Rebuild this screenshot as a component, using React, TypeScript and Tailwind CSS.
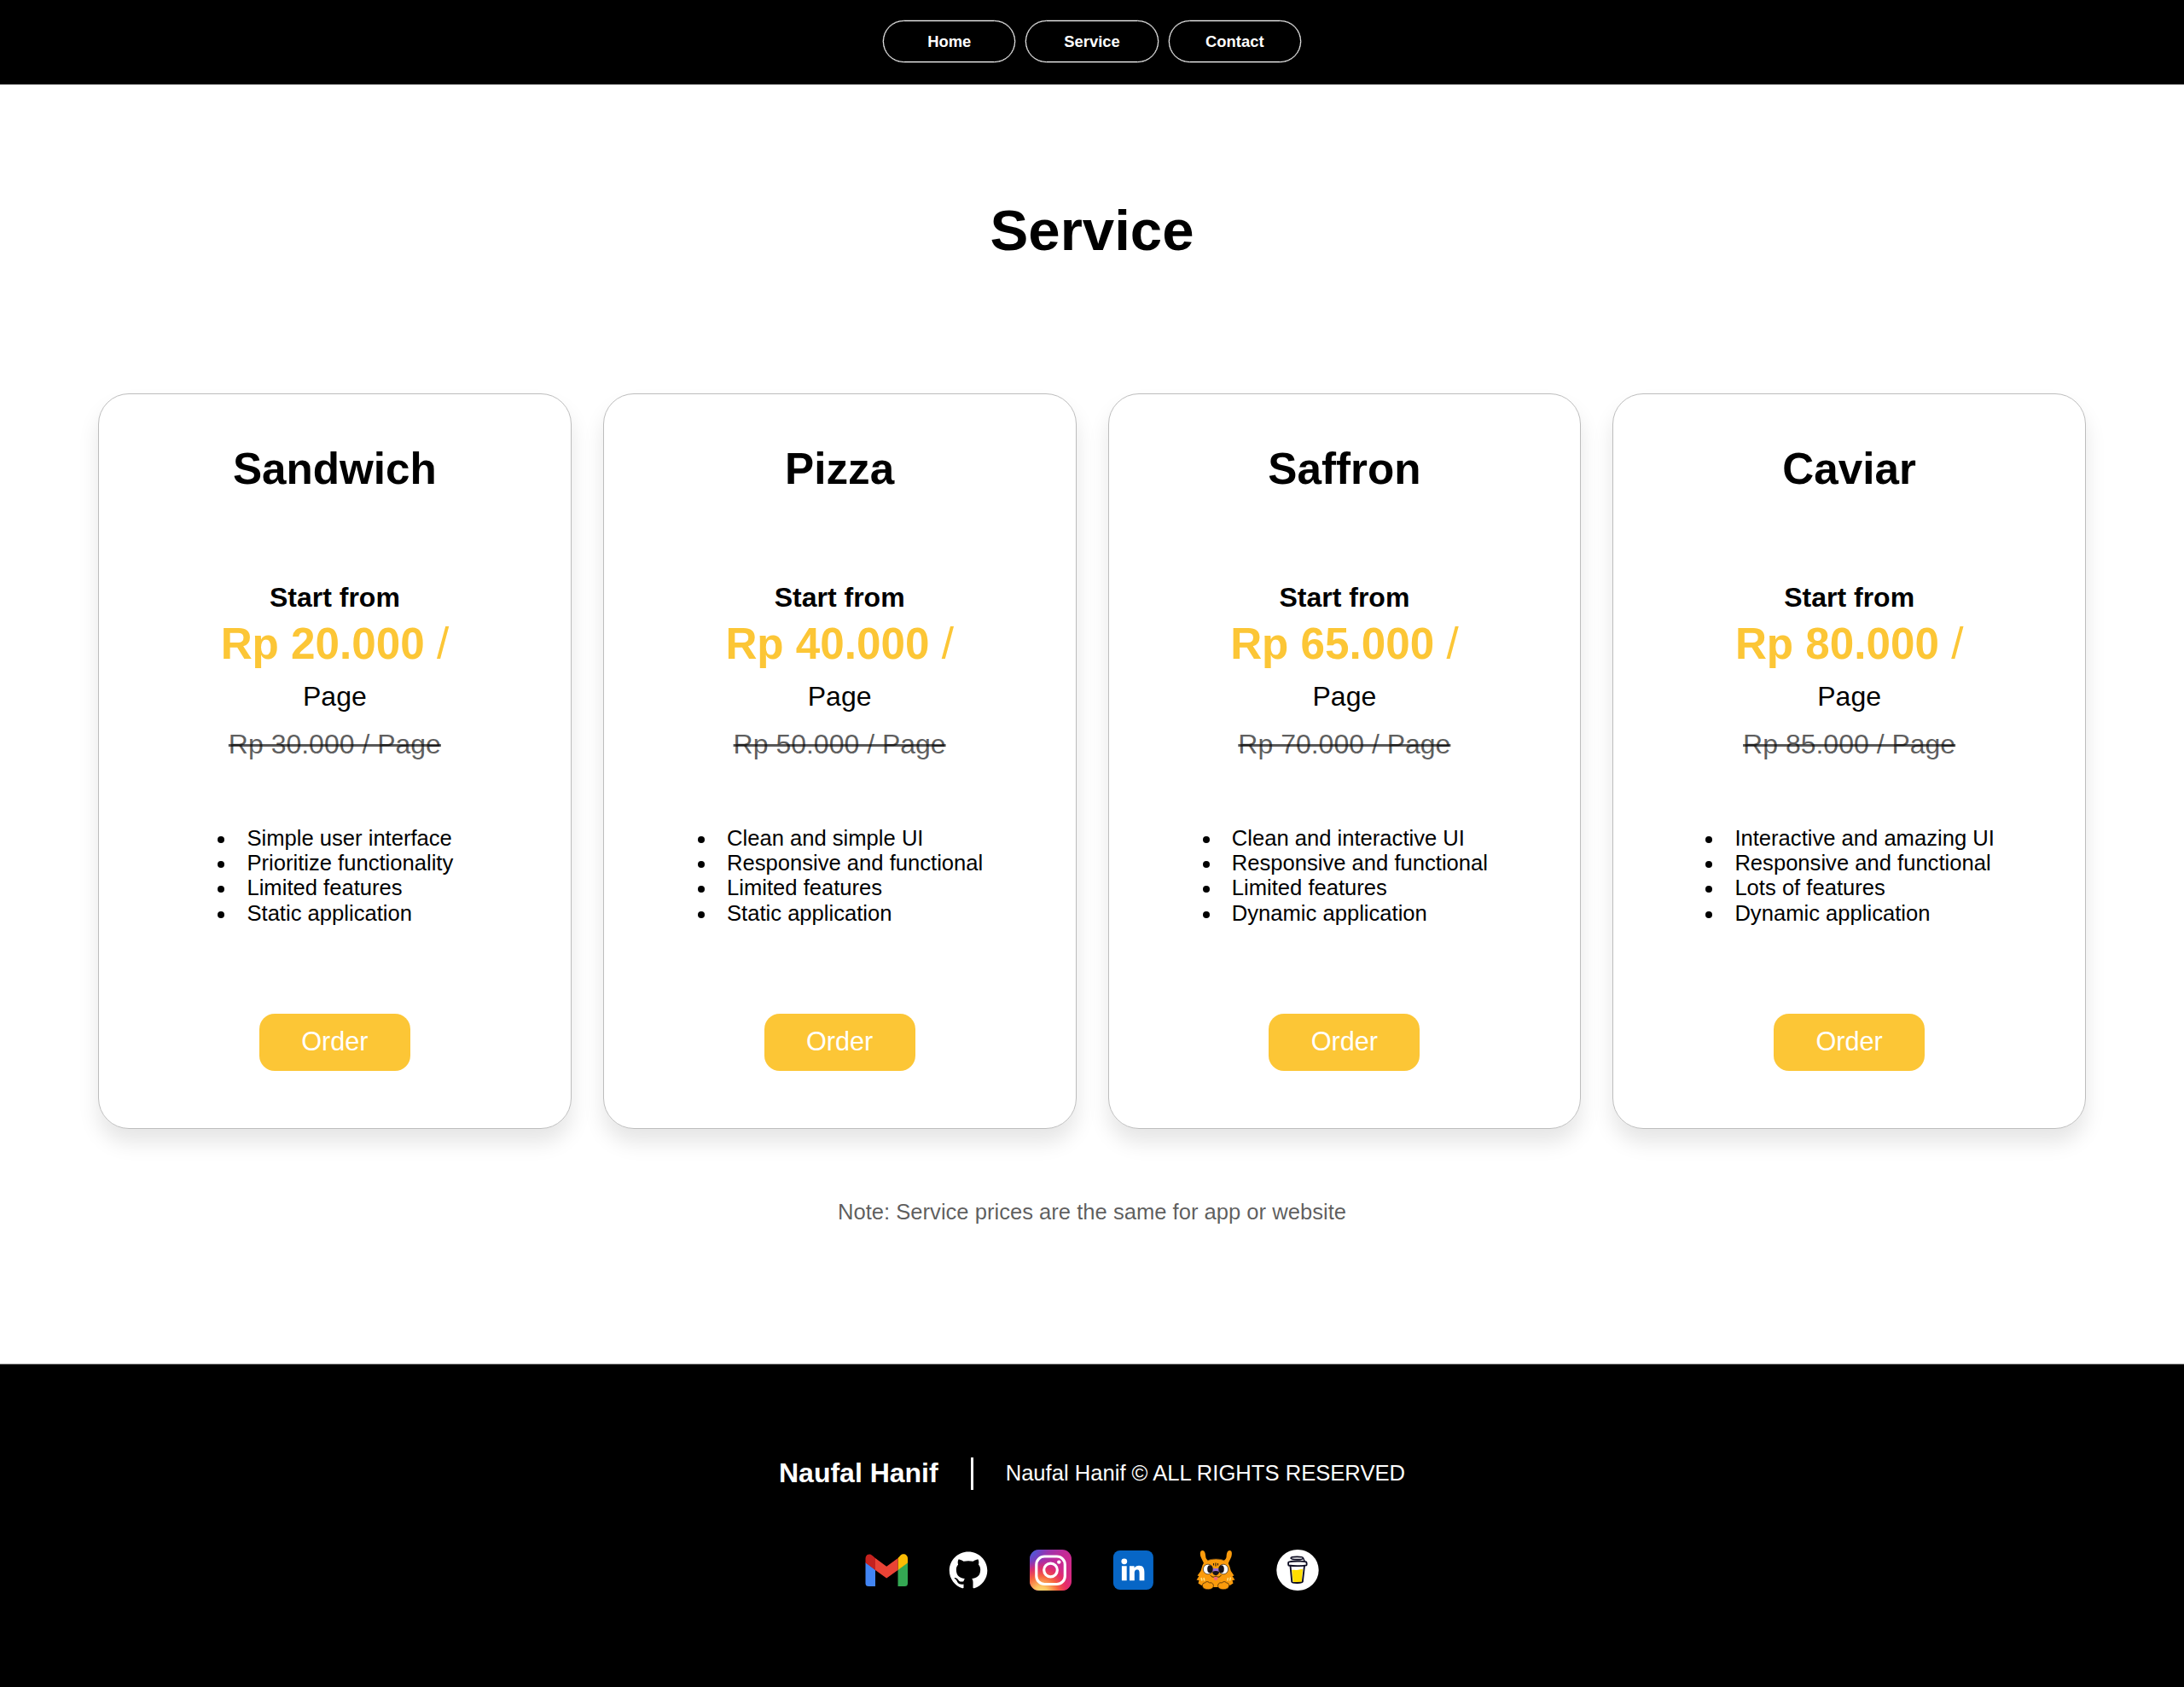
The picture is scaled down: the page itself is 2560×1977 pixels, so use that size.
import React from "react";

const nav = ["Home", "Service", "Contact"];

const plans = [
  { name: "Sandwich", price: "Rp 20.000", old: "Rp 30.000 / Page", items: ["Simple user interface", "Prioritize functionality", "Limited features", "Static application"] },
  { name: "Pizza", price: "Rp 40.000", old: "Rp 50.000 / Page", items: ["Clean and simple UI", "Responsive and functional", "Limited features", "Static application"] },
  { name: "Saffron", price: "Rp 65.000", old: "Rp 70.000 / Page", items: ["Clean and interactive UI", "Responsive and functional", "Limited features", "Dynamic application"] },
  { name: "Caviar", price: "Rp 80.000", old: "Rp 85.000 / Page", items: ["Interactive and amazing UI", "Responsive and functional", "Lots of features", "Dynamic application"] },
];

function Gmail() {
  return (
    <svg viewBox="0 0 50 48" className="h-12 w-[50px]">
      <path d="M0.5 15 12 23.5V43H4a3.5 3.5 0 0 1-3.5-3.5z" fill="#4285f4" />
      <path d="M38.5 23.5 50 15v24.500a3.500 3.500 0 0 1-3.500 3.500h-8z" fill="#34a853" />
      <path d="M38.500 10 41.500 6.800C45 3.500 50 5.800 50 10.500V15.500L38.500 24z" fill="#fbbc04" />
      <path d="M12 24V10l13.200 9.800L38.500 10v14L25.200 33.500z" fill="#ea4335" />
      <path d="M.5 15.500v-5C.5 5.800 5.500 3.500 9.200 7.500L12 10v14z" fill="#c5221f" />
    </svg>
  );
}

function Github() {
  return (
    <svg viewBox="0 0 50 48" className="h-12 w-[50px]">
      <g transform="translate(2.800 2) scale(1.855 1.825)">
        <path
          fill="#fff"
          d="M12 .297c-6.630 0-12 5.373-12 12 0 5.303 3.438 9.800 8.205 11.385.6.113.82-.258.82-.577 0-.285-.01-1.040-.015-2.040-3.338.724-4.042-1.610-4.042-1.610C4.422 18.070 3.633 17.700 3.633 17.700c-1.087-.744.084-.729.084-.729 1.205.084 1.838 1.236 1.838 1.236 1.070 1.835 2.809 1.305 3.495.998.108-.776.417-1.305.76-1.605-2.665-.3-5.466-1.332-5.466-5.930 0-1.310.465-2.380 1.235-3.220-.135-.303-.54-1.523.105-3.176 0 0 1.005-.322 3.300 1.230.96-.267 1.980-.399 3-.405 1.020.006 2.040.138 3 .405 2.280-1.552 3.285-1.230 3.285-1.230.645 1.653.24 2.873.12 3.176.765.84 1.230 1.910 1.230 3.220 0 4.610-2.805 5.625-5.475 5.920.42.36.81 1.096.81 2.220 0 1.606-.015 2.896-.015 3.286 0 .315.21.69.825.57C20.565 22.092 24 17.592 24 12.297c0-6.627-5.373-12-12-12"
        />
      </g>
    </svg>
  );
}

function Instagram() {
  return (
    <svg viewBox="0.700 0 50 48" className="h-12 w-[50px]">
      <defs>
        <linearGradient id="igBase" x1="0" y1="0" x2="1" y2="1">
          <stop offset="0" stopColor="#6a3fc8" />
          <stop offset=".45" stopColor="#c32a98" />
          <stop offset="1" stopColor="#e02a75" />
        </linearGradient>
        <radialGradient id="igWarm" cx=".27" cy="1.060" r=".82">
          <stop offset="0" stopColor="#fedd76" />
          <stop offset=".2" stopColor="#fdc661" />
          <stop offset=".5" stopColor="#f7653f" />
          <stop offset=".75" stopColor="#ee2f58" stopOpacity=".7" />
          <stop offset="1" stopColor="#d8278a" stopOpacity="0" />
        </radialGradient>
        <radialGradient id="igCool" cx="0" cy="0" r=".45">
          <stop offset="0" stopColor="#3a6be0" />
          <stop offset="1" stopColor="#6a3fc8" stopOpacity="0" />
        </radialGradient>
      </defs>
      <rect x=".7" y="0" width="49" height="48" rx="11" fill="url(#igBase)" />
      <rect x=".7" y="0" width="49" height="48" rx="11" fill="url(#igWarm)" />
      <rect x=".7" y="0" width="49" height="48" rx="11" fill="url(#igCool)" />
      <rect x="8.500" y="8" width="33.500" height="32.500" rx="9.500" fill="none" stroke="#fff" strokeWidth="3.200" />
      <circle cx="25.200" cy="24" r="7.800" fill="none" stroke="#fff" strokeWidth="3.200" />
      <circle cx="35" cy="14.600" r="2.200" fill="#fff" />
    </svg>
  );
}

function LinkedIn() {
  return (
    <svg viewBox="-0.400 0 50 48" className="h-12 w-[50px]">
      <rect x="1.500" y="1" width="47" height="46" rx="8" fill="#0766c6" />
      <circle cx="14.400" cy="13.800" r="3.400" fill="#fff" />
      <path d="M11.500 19.300h5.800v17h-5.800zM20.600 19.300h5.600v2.300c1-1.600 2.900-2.800 5.500-2.800 5.100 0 6.300 3.300 6.300 7.900v9.600h-5.800v-8.600c0-2.200-.2-4.200-2.700-4.200-2.600 0-3.100 2-3.100 4.100v8.700h-5.800z" fill="#fff" />
    </svg>
  );
}

function Mascot() {
  return (
    <svg viewBox="0 0 50 48" className="h-12 w-[50px]">
      <g fill="#fb9b0c">
        <path d="M9.500 1C12.500 1 13 5 13.200 8c.2 2.500 1.300 4 3.300 4.500l-5 5.500C10.500 13.500 8.500 11.500 7.500 8.500 6.500 5.500 6.300 1 9.500 1z" />
        <path d="M41.300 1c-3 0-3.500 4-3.700 7-.2 2.500-1.300 4-3.300 4.500l5 5.500c1-4.500 3-6.500 4-9.500 1-3 1.200-7.500-2-7.500z" />
        <path d="M25.200 11c-8.500 0-15 3-16.200 9L7.500 25 3.500 30.500l2 .5-3 4.500 3 .5-1 3.500c4 3 9 4.500 13 4.500h15c4 0 9-1.500 13-4.500l-1-3.500 3-.5-3-4.500 2-.5-3.700-5.500L41.400 20c-1.200-6-7.700-9-16.200-9z" />
      </g>
      <path d="M15 13c3-1.400 6-2 10.200-2s7.200.6 10.200 2" fill="none" stroke="#6b4310" strokeWidth=".8" />
      <path d="M22.500 16v2.400M25 15.500v4M27.500 16v2.400" stroke="#2b1b0d" strokeWidth="1.100" />
      <path d="M19 22h12.500l-1.500 4h-9.500z" fill="#9a6bd0" />
      <ellipse cx="16" cy="23" rx="5.600" ry="5.800" fill="#fff" stroke="#3a2a1a" strokeWidth=".7" />
      <ellipse cx="34" cy="23" rx="5.600" ry="5.800" fill="#fff" stroke="#3a2a1a" strokeWidth=".7" />
      <ellipse cx="18.300" cy="22.800" rx="3.100" ry="4.600" fill="#17131a" />
      <ellipse cx="31.700" cy="22.800" rx="3.100" ry="4.600" fill="#17131a" />
      <path d="M21.300 26c2-1.500 5.600-1.500 7.600 0 .3 2.500-2 4-3.800 4s-4.100-1.500-3.800-4z" fill="#17131a" />
      <path d="M19 30c.8 2.300 4.200 3 6.100.8 1.900 2.200 5.300 1.500 6.100-.8" fill="none" stroke="#2b1b0d" strokeWidth="1" />
      <path d="M22.800 32.600c1.200-.8 3.400-.8 4.600 0 .3 2-.6 3.600-2.300 3.600s-2.600-1.600-2.300-3.600z" fill="#f0677c" />
      <path d="M8 33l1 3.500M11 33l.8 3.500M42.500 32.500l-1 4M39.500 33l-.8 3.500" stroke="#ffdf80" strokeWidth="1.500" />
      <g fill="#fb9b0c" stroke="#2b1b0d" strokeWidth=".7">
        <path d="M9.500 43c-.5-2.500 1-4.300 3-4 .8-1.800 4-2 5 0 2.200-.8 4.500.5 4.800 2.500.5 3-1.800 5.200-6 5.200-4 0-6.500-1.500-6.800-3.700z" />
        <path d="M40.500 43c.5-2.500-1-4.300-3-4-.8-1.800-4-2-5 0-2.200-.8-4.500.5-4.800 2.500-.5 3 1.800 5.200 6 5.200 4 0 6.500-1.500 6.800-3.700z" />
      </g>
    </svg>
  );
}

function Coffee() {
  return (
    <svg viewBox="0 0 50 48" className="h-12 w-[50px]">
      <ellipse cx="25" cy="24" rx="24.700" ry="24" fill="#fff" />
      <path d="M18.200 24c4-1 5 .4 7.500-.2 2-.5 3.200-1 5.300-.8l-1.300 15.100c-3 .6-7 .6-10 0z" fill="#ffdd00" />
      <g fill="none" stroke="#0d0c22" strokeLinecap="round" strokeLinejoin="round">
        <path d="M16.500 19l1.800 18.800c.2 1.500 12.200 1.500 12.500 0L33 19" strokeWidth="1.900" />
        <path d="M14.500 14.500c5-1.300 15.500-1.300 20.500-.2.800 1.300.8 2.700.4 4-6 1-15 1-21 .2-.5-1.500-.5-2.700.1-4z" strokeWidth="1.800" />
        <path d="M33 13l-1.300-2.800" strokeWidth="1.500" />
        <ellipse cx="24.300" cy="10" rx="7.200" ry="1.600" strokeWidth="1.600" />
      </g>
    </svg>
  );
}

export default function App() {
  return (
    <div className="flex h-[1977px] w-[2560px] flex-col bg-white font-['Liberation_Sans',Arial,sans-serif] text-black">
      <nav className="flex h-[99px] shrink-0 justify-center gap-3 bg-black pt-6">
        {nav.map((n) => (
          <a key={n} className="flex h-[49px] w-[155.300px] items-center justify-center rounded-full border border-white text-[18.400px] font-bold text-white shadow-[0_0_0_0.300px_#fff]">
            {n}
          </a>
        ))}
      </nav>

      <main className="flex h-[1500px] shrink-0 flex-col items-center border-b border-[#999]">
        <h1 className="mt-[132px] text-[67.200px] leading-[77px] font-bold">Service</h1>

        <section className="mt-[153px] grid w-[2330px] grid-cols-4 gap-[37px]">
          {plans.map((p) => (
            <article key={p.name} className="flex h-[862px] flex-col items-center rounded-[36px] border border-[#bdbdbd] shadow-[0_16px_24px_rgba(0,0,0,0.1)]">
              <h2 className="mt-[58px] text-[51.200px] leading-[59px] font-bold">{p.name}</h2>
              <p className="mt-[103px] text-[32px] leading-[37px] font-bold">Start from</p>
              <p className="mt-[6px] text-[51.200px] leading-[59px] text-[#fcc636]">
                <b>{p.price}</b> /
              </p>
              <p className="mt-[14px] text-[32px] leading-[37px]">Page</p>
              <p className="mt-[19px] text-[32px] leading-[37px] text-black/65 line-through">{p.old}</p>
              <ul className="mt-[76.600px] list-disc pl-6 text-[25.600px] leading-[29.330px]">
                {p.items.map((t) => (
                  <li key={t} className="pl-3">{t}</li>
                ))}
              </ul>
              <button className="mt-[103px] h-[67px] w-[177px] rounded-[18px] bg-[#fcc636] text-[30.700px] text-white">Order</button>
            </article>
          ))}
        </section>

        <p className="mt-[82px] text-[25.600px] leading-[30px] text-black/65">Note: Service prices are the same for app or website</p>
      </main>

      <footer className="flex grow flex-col items-center bg-black text-white">
        <div className="mt-[108px] flex h-[38px] items-center">
          <span className="text-[32px] font-bold">Naufal Hanif</span>
          <span className="mx-[38px] mt-[2px] h-[38px] w-[3px] shrink-0 bg-white" />
          <span className="text-[25.600px]">Naufal Hanif © ALL RIGHTS RESERVED</span>
        </div>
        <div className="mt-[71px] flex gap-[46.400px]">
          <Gmail />
          <Github />
          <Instagram />
          <LinkedIn />
          <Mascot />
          <Coffee />
        </div>
      </footer>
    </div>
  );
}
